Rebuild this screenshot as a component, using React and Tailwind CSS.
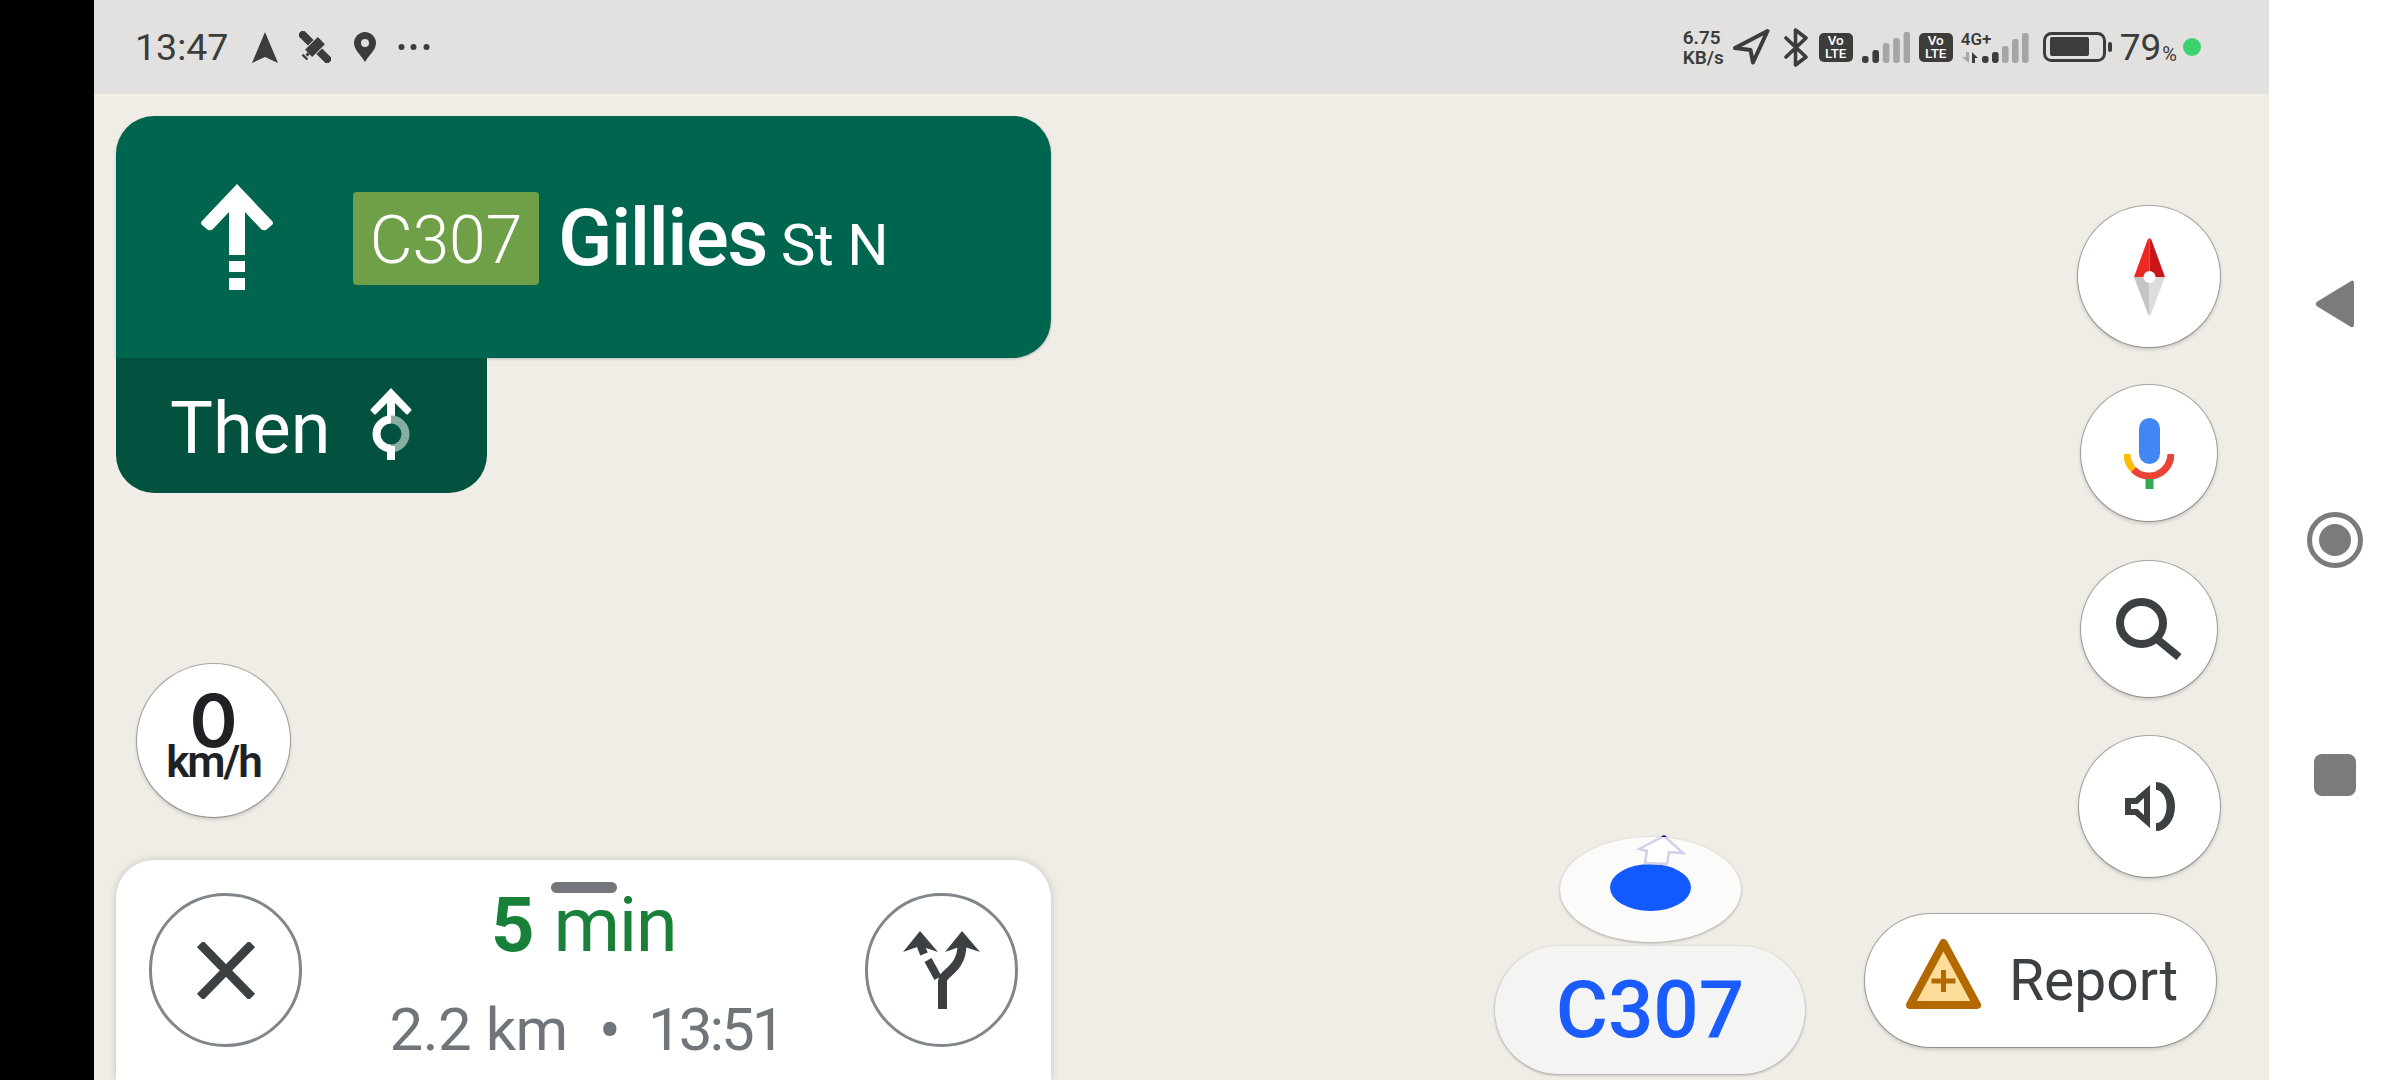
import React from "react";

const ring = "shadow-[0_0_0_1px_rgba(0,0,0,0.28),0_2px_4px_rgba(0,0,0,0.22)]";

function VoLte() {
  return (
    <div className="w-[34px] h-[29px] rounded-[5px] bg-[#3c3c3a] text-white flex flex-col items-center justify-center text-[13.5px] leading-[13px] font-medium">
      <span>Vo</span>
      <span>LTE</span>
    </div>
  );
}

function Signal() {
  const bars = [
    [0, 24, "#3c3c3a"],
    [10.4, 18, "#3c3c3a"],
    [20.8, 11, "#a5a5a3"],
    [31.2, 6, "#a5a5a3"],
    [41.6, 0, "#a5a5a3"],
  ];
  return (
    <svg width="48" height="31" viewBox="0 0 48 31" className="block">
      {bars.map(([x, y, c]) => (
        <rect key={x} x={x} y={y} width="6.6" height={31 - y} rx="2.4" fill={c} />
      ))}
    </svg>
  );
}

function Signal2() {
  const bars = [
    [21, 23, "#3c3c3a"],
    [31, 19, "#3c3c3a"],
    [41, 13, "#a5a5a3"],
    [51, 6, "#a5a5a3"],
    [61, 0, "#a5a5a3"],
  ];
  return (
    <div className="relative w-[68px] h-[30px]">
      <svg width="68" height="30" viewBox="0 0 68 30" className="block">
        {bars.map(([x, y, c]) => (
          <rect key={x} x={x} y={y} width="6.6" height={30 - y} rx="2.4" fill={c} />
        ))}
        <path d="M1 24 L5 24 V19 H8 V30 Z" fill="#a5a5a3" />
        <path d="M11 19 L17 25 H14 V30 H11 Z" fill="#3c3c3a" />
      </svg>
      <span className="absolute left-0 top-[-2px] text-[17px] leading-[17px] font-semibold text-[#3c3c3a]">4G+</span>
    </div>
  );
}

function StatusBar() {
  return (
    <div className="h-[94px] bg-[#e2e1df] flex items-center pl-[41px] pr-[68px] text-[#3c3c3a]">
      <span className="text-[37.5px] leading-[37px] mt-[1px]">13:47</span>
      <svg width="26" height="31" viewBox="0 0 26 31" className="ml-[24px]">
        <path d="M13 0 L26 31 L13 25 L0 31 Z" fill="#3c3c3a" />
      </svg>
      <svg width="32" height="32" viewBox="0 0 32 32" className="ml-[21px]">
        <g transform="rotate(45 16 16)" fill="#3c3c3a">
          <rect x="-5" y="12" width="15" height="8" />
          <rect x="22" y="12" width="15" height="8" />
          <rect x="11" y="7" width="10" height="18" />
          <rect x="14.5" y="25" width="3" height="3" />
          <rect x="12.5" y="29" width="7" height="2.4" />
        </g>
      </svg>
      <svg width="22" height="30" viewBox="0 0 22 30" className="ml-[23px]">
        <path fillRule="evenodd" d="M11 0 C17 0 22 5 22 11 C22 18 15 23 11 30 C7 23 0 18 0 11 C0 5 5 0 11 0 Z M11 7 A4 4 0 1 0 11 15 A4 4 0 1 0 11 7 Z" fill="#3c3c3a" />
      </svg>
      <svg width="34" height="8" viewBox="0 0 34 8" className="ml-[22px]">
        <circle cx="3.5" cy="4" r="3" fill="#3c3c3a" />
        <circle cx="15.5" cy="4" r="3" fill="#3c3c3a" />
        <circle cx="28.5" cy="4" r="3" fill="#3c3c3a" />
      </svg>

      <div className="ml-auto flex items-center">
        <div className="w-[42px] mt-[2px] flex flex-col text-[19px] leading-[20px] font-semibold whitespace-nowrap">
          <span>6.75</span>
          <span>KB/s</span>
        </div>
        <svg width="38" height="36" viewBox="0 0 38 36" className="ml-[7px]">
          <path d="M35.5 2 L3 19 L18.5 21 L21 33.5 Z" fill="none" stroke="#3c3c3a" strokeWidth="4" strokeLinejoin="round" />
        </svg>
        <svg width="24" height="39" viewBox="0 0 24 39" className="ml-[14px]">
          <path d="M2 10 L22 29 L11.5 37 V2 L22 10 L2 29" fill="none" stroke="#3c3c3a" strokeWidth="3.6" strokeLinejoin="round" strokeLinecap="round" />
        </svg>
        <div className="ml-[11px]"><VoLte /></div>
        <div className="ml-[9px]"><Signal /></div>
        <div className="ml-[9px]"><VoLte /></div>
        <div className="ml-[8px] mt-[1px]"><Signal2 /></div>
        <svg width="69" height="30" viewBox="0 0 69 30" className="ml-[14px]">
          <rect x="1.5" y="1.5" width="60" height="27" rx="7" fill="none" stroke="#3c3c3a" strokeWidth="3" />
          <rect x="7" y="5" width="39" height="19" rx="2" fill="#3c3c3a" />
          <rect x="65" y="10" width="4" height="10" rx="2" fill="#3c3c3a" />
        </svg>
        <span className="ml-[8px] text-[37px] leading-[37px] mt-[1px]">79</span>
        <span className="ml-[1px] text-[20px] leading-[20px] mt-[13px]">%</span>
        <span className="ml-[6px] w-[18px] h-[18px] rounded-full bg-[#3bd16f]" />
      </div>
    </div>
  );
}

function MainArrow() {
  return (
    <svg width="72" height="106" viewBox="0 0 72 106" className="ml-[85px] mt-[68px] shrink-0">
      <path
        d="M36 0 L71 37 Q73 39 71 41 L65 46 Q62 47 60 45 L44 28 V71 H28 V28 L12 45 Q10 47 7 46 L1 41 Q-1 39 1 37 Z"
        fill="#fff"
      />
      <rect x="28" y="77" width="16" height="11" fill="#fff" />
      <rect x="28" y="94" width="16" height="12" fill="#fff" />
    </svg>
  );
}

function ThenIcon() {
  return (
    <svg width="42" height="72" viewBox="0 0 42 72" className="ml-[39px] mt-[30px] shrink-0">
      <path d="M21 0 L41 21 Q42 22 41 23 L38 26 Q37 27 36 26 L25 15 V30 H17 V15 L6 26 Q5 27 4 26 L1 23 Q0 22 1 21 Z" fill="#fff" />
      <path d="M21 31.5 A14.5 14.5 0 0 1 21 60.5" fill="none" stroke="#85ada0" strokeWidth="8" />
      <path d="M21 31.5 A14.5 14.5 0 0 0 21 60.5" fill="none" stroke="#fff" strokeWidth="8" />
      <rect x="17" y="58" width="8" height="14" fill="#fff" />
    </svg>
  );
}

function Directions() {
  return (
    <div className="w-[935px] flex flex-col">
      <div className="h-[242px] bg-[#00654f] rounded-[38px] rounded-bl-none flex items-start text-white shadow-[0_1px_3px_rgba(0,0,0,0.2)]">
        <MainArrow />
        <div className="ml-[80px] mt-[76px] w-[186px] h-[93px] bg-[#6f9f47] rounded-[4px] flex items-center justify-center pt-[4px] text-[66px] leading-[66px] font-light">
          C307
        </div>
        <div className="ml-[19px] mt-[82px] flex items-baseline">
          <span className="text-[80px] leading-[80px] font-medium tracking-[-1.6px]">Gillies</span>
          <span className="ml-[14px] text-[58px] leading-[58px] tracking-[-0.5px]">St N</span>
        </div>
      </div>
      <div className="w-[371px] h-[135px] bg-[#02523f] rounded-b-[38px] flex items-start text-white pl-[54px]">
        <span className="mt-[35px] text-[72px] leading-[72px]">Then</span>
        <ThenIcon />
      </div>
    </div>
  );
}

function Speed() {
  return (
    <div className={`ml-[21px] mt-[171px] w-[153px] h-[153px] rounded-full bg-white flex flex-col items-center pt-[20px] text-[#202124] ${ring}`}>
      <span className="font-['Inter',sans-serif] text-[73px] leading-[74px] font-semibold">0</span>
      <span className="mt-[-18px] text-[44px] leading-[44px] font-semibold tracking-[-2px]">km/h</span>
    </div>
  );
}

function BottomCard() {
  return (
    <div className="mt-[43px] w-[935px] h-[220px] bg-white rounded-t-[38px] flex items-start px-[33px] pt-[33px] shadow-[0_0_8px_rgba(0,0,0,0.18)]">
      <div className="w-[153px] h-[154px] rounded-full border-[3px] border-[#80868b] flex items-center justify-center shrink-0">
        <svg width="58" height="57" viewBox="0 0 58 57">
          <path d="M3 2 L55 55 M55 2 L3 55" stroke="#3c4043" strokeWidth="9" fill="none" />
        </svg>
      </div>
      <div className="flex-1 flex flex-col items-center mt-[-11px]">
        <div className="w-[66px] h-[11px] rounded-full bg-[#74787c]" />
        <div className="mt-[-5px] text-[76px] leading-[74px] text-[#188038] flex items-baseline">
          <span className="font-bold">5</span>
          <span className="ml-[19px] tracking-[-1.5px]">min</span>
        </div>
        <div className="mt-[36px] ml-[5px] text-[60px] leading-[60px] text-[#70757a] flex items-baseline">
          <span className="tracking-[-0.5px]">2.2 km</span>
          <span className="ml-[31px] text-[66px] leading-[60px] relative top-[4px]">•</span>
          <span className="ml-[27px] tracking-[-3px]">13:51</span>
        </div>
      </div>
      <div className="w-[153px] h-[154px] rounded-full border-[3px] border-[#80868b] flex items-center justify-center shrink-0">
        <svg width="77" height="78" viewBox="0 0 77 78">
          <path d="M39.5 78 V50 C39.5 42 59 38 59 14" fill="none" stroke="#3c4043" strokeWidth="9" />
          <path d="M59 0 L77 21 L59 15 L42 21 Z" fill="#3c4043" />
          <path d="M35 47 L25 29" fill="none" stroke="#3c4043" strokeWidth="8" />
          <path d="M21 23 L17 13" fill="none" stroke="#3c4043" strokeWidth="8" />
          <path d="M17 0 L35 21 L17 15 L0 21 Z" fill="#3c4043" />
        </svg>
      </div>
    </div>
  );
}

function Puck() {
  return (
    <div className="relative w-[181px] h-[105px] rounded-[50%] bg-[#fcfbf9] flex items-center justify-center pb-[4px] shadow-[0_1px_3px_rgba(0,0,0,0.3)]">
      <div className="w-[81px] h-[47px] rounded-[50%] bg-[#1259ff]" />
      <svg width="50" height="32" viewBox="0 0 50 32" className="absolute left-[76px] top-[-2px]">
        <path d="M28 1 L3 14 L11 16 L9 28 L31 29 L33 17 L47 18 Z" fill="#fff" stroke="#d0d0e8" strokeWidth="2.5" />
        <path d="M25 2 L28 0 L31 2 Z" fill="#000066" />
      </svg>
    </div>
  );
}

function CenterColumn() {
  return (
    <div className="ml-[444px] w-[310px] flex flex-col items-center pt-[743px]">
      <Puck />
      <div className="mt-[4px] w-[310px] h-[128px] rounded-[64px] bg-[#f4f4f2] flex items-center justify-center text-[80px] leading-[80px] font-medium text-[#1a5cff] shadow-[0_1px_3px_rgba(0,0,0,0.35)]">
        C307
      </div>
    </div>
  );
}

function RightColumn() {
  return (
    <div className="ml-[60px] w-[355px] flex flex-col items-end pt-[112px]">
      <div className={`w-[142px] h-[141px] rounded-full bg-white flex items-center justify-center ${ring}`}>
        <svg width="31" height="78" viewBox="0 0 31 78">
          <path d="M15.5 0 L15.5 39 L0 39 L13.5 2 Q15 0 15.5 0 Z" fill="#ee2722" />
          <path d="M15.5 0 L15.5 39 L31 39 L17.5 2 Q16 0 15.5 0 Z" fill="#c9161a" />
          <path d="M15.5 78 L15.5 39 L0 39 L14 76 Q15 78 15.5 78 Z" fill="#c4c4c4" />
          <path d="M15.5 78 L15.5 39 L31 39 L17 76 Q16 78 15.5 78 Z" fill="#dcdcdc" />
          <circle cx="15.5" cy="39" r="6" fill="#fff" />
        </svg>
      </div>
      <div className={`mt-[38px] mr-[3px] w-[136px] h-[136px] rounded-full bg-white flex items-center justify-center ${ring}`}>
        <svg width="50" height="71" viewBox="0 0 50 71">
          <rect x="15" y="0" width="21" height="46" rx="10.5" fill="#4285f4" />
          <path d="M3 36 A22 22 0 0 0 9.4 51.6" fill="none" stroke="#fbbc05" strokeWidth="7" />
          <path d="M9.4 51.6 A22 22 0 0 0 47 36" fill="none" stroke="#ea4335" strokeWidth="7" />
          <rect x="21.5" y="61" width="8" height="10" fill="#34a853" />
        </svg>
      </div>
      <div className={`mt-[40px] mr-[3px] w-[136px] h-[136px] rounded-full bg-white flex items-center justify-center ${ring}`}>
        <svg width="66" height="62" viewBox="0 0 66 62">
          <ellipse cx="25.5" cy="25" rx="21.5" ry="21" fill="none" stroke="#3c4043" strokeWidth="8" />
          <path d="M41 41 L63 59" fill="none" stroke="#3c4043" strokeWidth="8" />
        </svg>
      </div>
      <div className={`mt-[39px] w-[141px] h-[141px] rounded-full bg-white flex items-center justify-center ${ring}`}>
        <svg width="50" height="49" viewBox="0 0 50 49">
          <path fillRule="evenodd" d="M0 16 H10 L25 3 V46 L10 33 H0 Z M6 22 V27 H12.5 L19 33 V16 L12.5 22 Z" fill="#3c4043" />
          <path d="M31 0 A19 24.5 0 0 1 31 49 V41 A10.5 16.5 0 0 0 31 8 Z" fill="#3c4043" />
        </svg>
      </div>
      <div className={`mt-[37px] mr-[4px] w-[351px] h-[133px] rounded-[66px] bg-white flex items-center pl-[41px] ${ring}`}>
        <svg width="75" height="72" viewBox="0 0 75 72" className="shrink-0 mb-[13px]">
          <path d="M37.5 5 L71 67 L4 67 Z" fill="#fedd9b" stroke="#b26a00" strokeWidth="8" strokeLinejoin="round" />
          <path d="M25.5 43 H49.5 M37.5 32 V54" stroke="#b26a00" strokeWidth="5" fill="none" />
        </svg>
        <span className="ml-[28px] text-[57px] leading-[56px] text-[#3c4043]">Report</span>
      </div>
    </div>
  );
}

function NavBar() {
  return (
    <div className="w-[131px] h-full bg-white flex flex-col items-center pl-[1px]">
      <svg width="40" height="48" viewBox="0 0 40 48" className="mt-[280px]">
        <path d="M37 0.5 Q39 0 39 3 V45 Q39 48 36 47 L1.5 26 Q0 24 1.5 22 Z" fill="#7b7b7b" />
      </svg>
      <div className="mt-[184px] w-[56px] h-[56px] rounded-full border-[5px] border-[#7b7b7b] flex items-center justify-center">
        <div className="w-[32px] h-[32px] rounded-full bg-[#7b7b7b]" />
      </div>
      <div className="mt-[186px] w-[42px] h-[42px] rounded-[8px] bg-[#7b7b7b]" />
    </div>
  );
}

export default function App() {
  return (
    <div className="w-[2400px] h-[1080px] flex overflow-hidden font-['Roboto',sans-serif]">
      <div className="w-[94px] h-full bg-black shrink-0" />
      <div className="w-[2175px] h-full flex flex-col shrink-0">
        <StatusBar />
        <div className="h-[986px] bg-[#efede6] flex overflow-hidden">
          <div className="ml-[22px] pt-[22px] w-[935px] flex flex-col shrink-0">
            <Directions />
            <Speed />
            <BottomCard />
          </div>
          <CenterColumn />
          <RightColumn />
        </div>
      </div>
      <NavBar />
    </div>
  );
}
